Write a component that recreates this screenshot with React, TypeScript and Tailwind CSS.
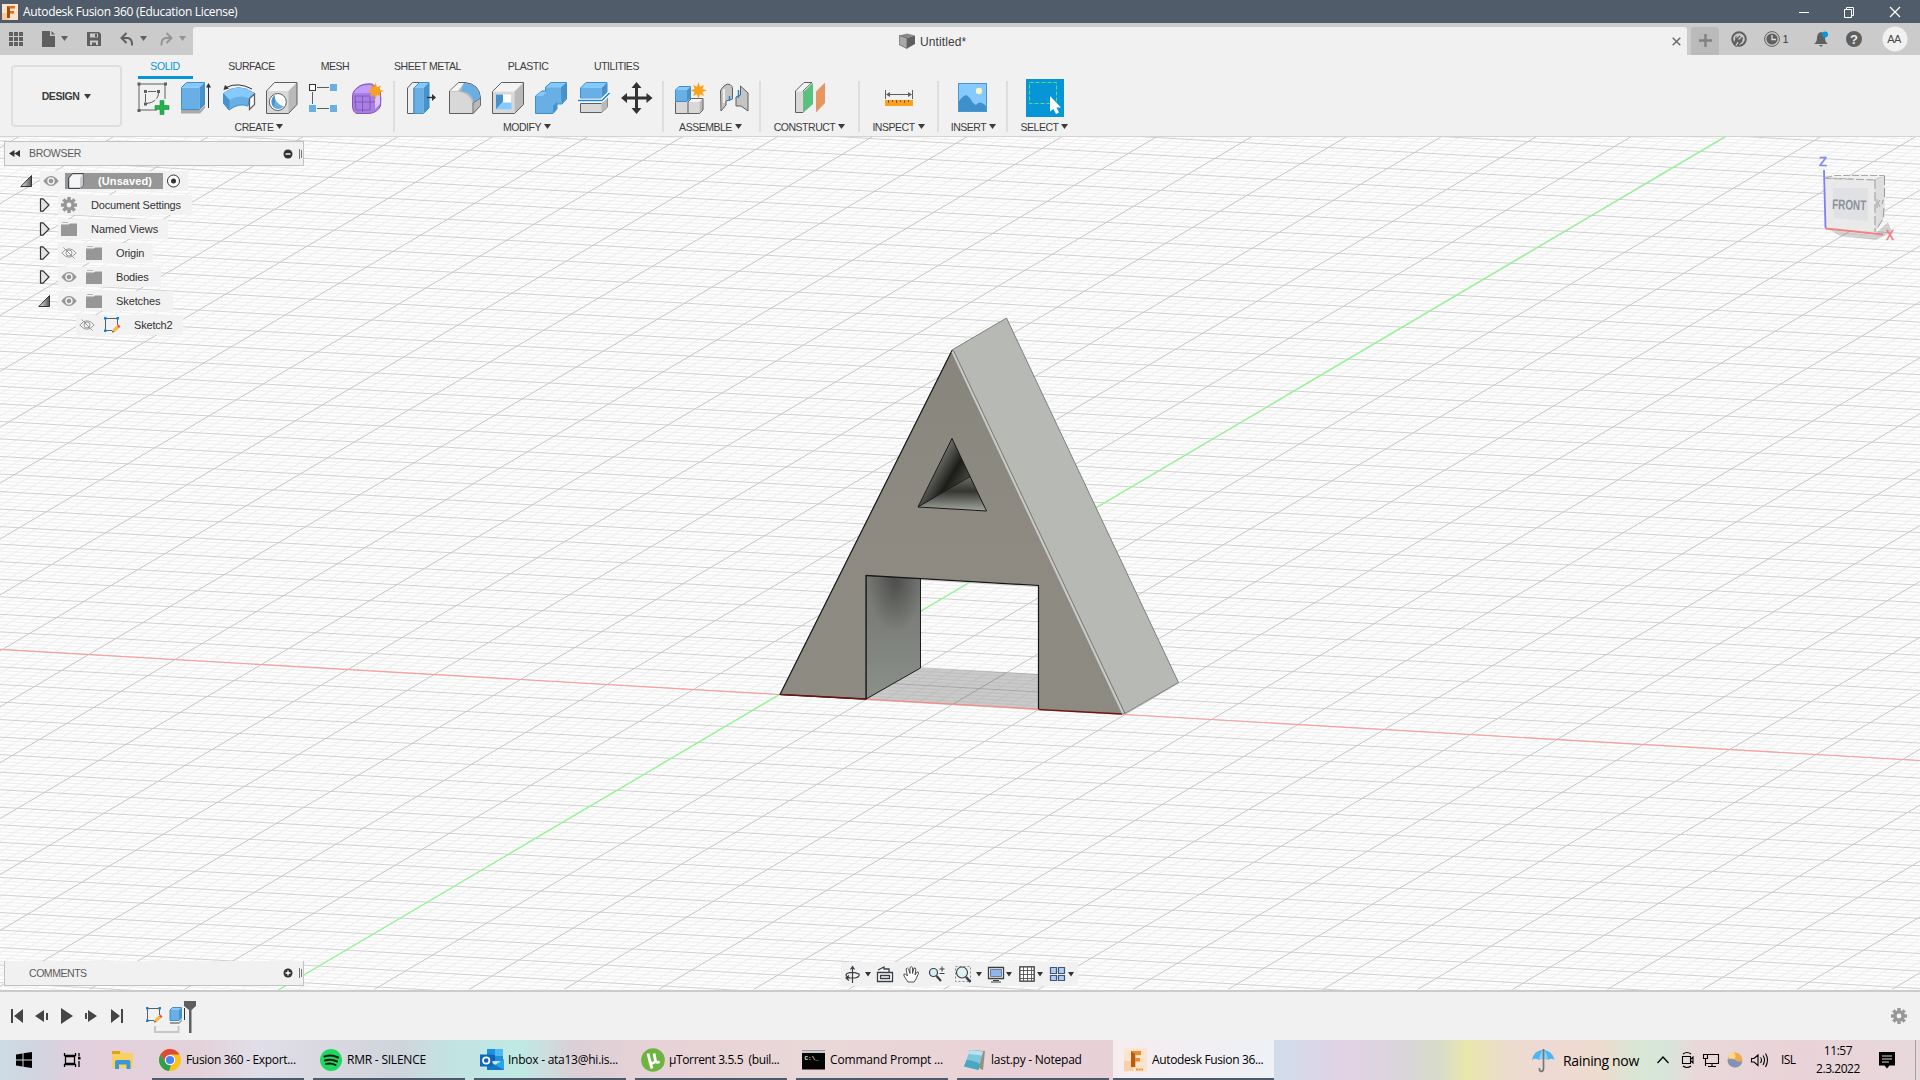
import React from "react";

const APP_FONT = "font-['Liberation_Sans',Arial,sans-serif]";
const SYS_FONT = "font-['Open_Sans','Noto_Sans',sans-serif]";

/* An icon drawn in window coordinates, cropped to the box it occupies. */
function Ico({ x, y, w, h, children }: { x: number; y: number; w: number; h: number; children: React.ReactNode }) {
  return (
    <svg width={w} height={h} viewBox={`${x} ${y} ${w} ${h}`} className="block shrink-0" fill="none">
      {children}
    </svg>
  );
}

function Caret({ className = "text-[#3c3c3c]" }: { className?: string }) {
  return (
    <svg width="7" height="5" viewBox="0 0 7 5" className={`block shrink-0 ${className}`}>
      <path d="M0 0H7L3.5 5Z" fill="currentColor" />
    </svg>
  );
}

function TitleBar() {
  return (
    <header className={`flex h-[23px] items-center bg-[#505c69] text-white ${SYS_FONT}`}>
      <div className="ml-0.5 w-4">
        <Ico x={0} y={0} w={16} h={16}>
          <rect width="16" height="16" fill="#fde3cd" />
          <rect y="9" width="7" height="7" fill="#f6c9a4" />
          <path d="M5 2H13V4.6H8V7H12V9.4H8V14H5Z" fill="#d9701c" />
          <path d="M5 2L8 4.6V14H5Z" fill="#a84c0c" />
        </Ico>
      </div>
      <span className="ml-[5px] whitespace-nowrap pt-px text-[12px] tracking-[-0.32px]">Autodesk Fusion 360 (Education License)</span>
      <div className="ml-auto mr-[19px] flex gap-[34px]">
        <Ico x={0} y={0} w={12} h={12}><path d="M2 6.5H12" stroke="#fff" /></Ico>
        <Ico x={0} y={0} w={12} h={12}>
          <path d="M1.5 3.5H8.5V11.5H1.5ZM3.5 3V1.5H10.500V9.500H9" stroke="#fff" />
        </Ico>
        <Ico x={0} y={0} w={12} h={12}><path d="M1 1L11 11M11 1L1 11" stroke="#fff" strokeWidth="1.2" /></Ico>
      </div>
    </header>
  );
}

function DocBar() {
  return (
    <div className={`flex h-8 bg-[#cbcbcb] ${APP_FONT}`}>
      <div className="w-[193px]">
        <Ico x={0} y={23} w={193} h={32}>
          <g fill="#5f5f5f">
            {[9, 14, 19].map((x) => [32, 37, 42].map((y) => <rect key={`${x}-${y}`} x={x} y={y} width="4" height="4" />))}
            <path d="M42 31H50V36H55V47H42Z" />
            <path d="M51.500 31L55 34.500H51.500Z" />
            <path d="M61 36H68L64.500 41Z" />
            <path fillRule="evenodd" d="M87 32H99L101 34V46H87ZM90 33.500V37.500H98V33.500ZM90 40.500V45H92V42.500H96V45H98V40.500Z" />
            <path d="M95 34H97V37H95Z" />
            <path d="M140 36H147L143.500 41Z" />
          </g>
          <path d="M126.500 33L121.500 38L126.500 43M122 38H128Q132.500 39 132 45.500" stroke="#5f5f5f" strokeWidth="2" />
          <path d="M166.500 33L171.500 38L166.500 43M171 38H165.500Q161 39 161.500 45.500" stroke="#949494" strokeWidth="2" />
          <path d="M179 36H186L182.500 41Z" fill="#949494" />
        </Ico>
      </div>
      <div className="mt-1 flex w-[1494px] items-center rounded-t-[3px] bg-[#f1f1f1]">
        <div className="ml-[706px] flex items-center gap-[5px]">
          <Ico x={0} y={0} w={16} h={16}>
            <path d="M0 2.500L8 0.500L16 2.500L8 5Z" fill="#8a8a8a" />
            <path d="M0 2.500L8 5V15.500L0 11.500Z" fill="#a9a9a9" stroke="#5f5f5f" strokeWidth=".8" />
            <path d="M16 2.500L8 5V15.500L16 11Z" fill="#5f5f5f" />
          </Ico>
          <span className="pt-px text-[12px] tracking-[0.1px] text-[#3c3c3c]">Untitled*</span>
        </div>
        <div className="ml-auto mr-[6px]">
          <Ico x={0} y={0} w={9} h={9}><path d="M.7.7L8.300 8.300M8.300.7L.7 8.300" stroke="#6b6b6b" strokeWidth="1.500" /></Ico>
        </div>
      </div>
      <div className="ml-1 mt-1 flex w-7 items-center justify-center rounded-t-[3px] bg-[#bababa] pb-px">
        <Ico x={0} y={0} w={13} h={13}><path d="M6.500 0V13M0 6.500H13" stroke="#808080" strokeWidth="2.400" /></Ico>
      </div>
      <div className="w-[201px]">
        <Ico x={1719} y={23} w={201} h={32}>
          <circle cx="1739" cy="39" r="6.800" stroke="#5f5f5f" strokeWidth="2" />
          <path d="M1733 44L1736 47L1742 42L1743 37.500L1738.500 35L1735.500 36.500L1735 40Z" fill="#5f5f5f" />
          <path d="M1739 35L1736.500 37.500M1742 36L1738.500 39.500M1736 45.500L1738 42" stroke="#cbcbcb" strokeWidth="1.400" />
          <circle cx="1772" cy="39" r="7.400" stroke="#5f5f5f" />
          <circle cx="1772" cy="39" r="5.600" fill="#5f5f5f" />
          <path d="M1772 35V39.500H1776" stroke="#ddd" strokeWidth="1.300" />
          <path d="M1814 44Q1817 42 1817 38Q1817 33 1821 32Q1825 33 1825 38Q1825 42 1828 44ZM1819 45H1823L1821 47Z" fill="#5f5f5f" />
          <circle cx="1825" cy="34.500" r="3" fill="#0696d7" />
          <circle cx="1854" cy="39" r="8" fill="#5f5f5f" />
          <text x="1854" y="43.800" textAnchor="middle" className="font-['Liberation_Sans'] text-[13px] font-bold" fill="#ececec">?</text>
          <text x="1782.500" y="43" className="font-['Liberation_Sans'] text-[11px]" fill="#3c3c3c">1</text>
          <circle cx="1895" cy="39" r="12.500" fill="#f1f1f1" />
          <text x="1894" y="43" textAnchor="middle" className="font-['Liberation_Sans'] text-[11px] tracking-[-0.5px]" fill="#4b4b4b">AA</text>
        </Ico>
      </div>
    </div>
  );
}

const TABS: [string, string][] = [
  ["SOLID", "w-[55px] pr-px text-[#0696d7] border-[#0696d7]"],
  ["SURFACE", "w-[117px] border-transparent"],
  ["MESH", "w-[50px] border-transparent"],
  ["SHEET METAL", "w-[135px] border-transparent"],
  ["PLASTIC", "w-[66px] border-transparent"],
  ["UTILITIES", "w-[111px] border-transparent"],
];

const G = "#5f5f5f";
const Star = ({ x, y }: { x: number; y: number }) => (
  <g transform={`translate(${x} ${y})`}>
    <path d="M0-8.500L1.500-3.800L5.500-5.500L3.800-1.500L8.500 0L3.800 1.500L5.500 5.500L1.500 3.800L0 8.500L-1.500 3.800L-5.500 5.500L-3.800 1.500L-8.500 0L-3.800-1.500L-5.500-5.500L-1.500-3.800Z" fill="#faa21b" />
  </g>
);

/* Box with a light top and a dark right side. */
const Box = ({ x, y, w, h, d, blue, line = G }: { x: number; y: number; w: number; h: number; d: number; blue?: boolean; line?: string }) => (
  <g stroke={blue ? "#3f8fca" : line} strokeWidth="1" strokeLinejoin="round">
    <path d={`M${x} ${y + d}h${w}v${h}h${-w}Z`} fill={blue ? "#68afe6" : "#d8d8d8"} stroke="none" />
    <path d={`M${x} ${y + d}l${d} ${-d}h${w}l${-d} ${d}Z`} fill={blue ? "#86c9ff" : "#f4f4f4"} stroke="none" />
    <path d={`M${x + w} ${y + d}l${d} ${-d}v${h}l${-d} ${d}Z`} fill={blue ? "#4792cd" : "#b9b9b9"} stroke="none" />
    <path d={`M${x} ${y + d}l${d} ${-d}h${w}v${h}l${-d} ${d}h${-w}Z`} />
  </g>
);

const CREATE_ICONS = [
  <g key="sketch">
    <path d="M139 84H165M139 84V110M165 84V99M139 110H157" stroke={G} />
    <path d="M137.500 82.500h3v3h-3zM164 82.500h3v3h-3zM137.500 109h3v3h-3zM144 90h3v3h-3zM157 90h3v3h-3zM144 102.500h3v3h-3z" fill={G} />
    <path d="M148 91.500H156M145.500 94V102M147 103.500Q158 102 158.500 93" stroke={G} strokeDasharray="9 2" />
    <path d="M160 100.500h4v5h5v4h-5v5h-4v-5h-5v-4h5z" fill="#24b04e" stroke="#1d9340" strokeWidth=".6" />
  </g>,
  <g key="extrude">
    <path d="M181 110H200L205 105V108L200 113.500H181Z" fill="#a9a9a9" />
    <Box x={181.500} y={82.500} w={18} h={22} d={5} blue />
    <path d="M208.500 108V84" stroke="#333" /><path d="M206 87.500L208.500 83L211 87.500Z" fill="#333" />
  </g>,
  <g key="revolve">
    <path d="M223.500 93.500Q238 82 254.500 93.500L249.500 98.500L248 106Q239 102.500 229 110L223.500 103Z" fill="#68afe6" stroke="#3f8fca" />
    <path d="M223.500 93.500Q238 82 254.500 93.500L249 98.500Q240 94 229.500 100Z" fill="#86c9ff" />
    <path d="M223.500 93.500L229.500 100V110.500L223.500 104Z" fill="#4792cd" />
    <path d="M249.500 98.500L254.500 94V104.500L249.500 109.500Z" fill="#fff" stroke={G} strokeWidth="1.300" />
    <path d="M226 87.500Q238 81.500 252 89" stroke="#333" /><path d="M223.500 90L225 85L229 88.500Z" fill="#333" />
  </g>,
  <g key="hole">
    <path d="M266.500 91L274.500 82.500H297V104.500L288.500 113.500H266.500Z" fill="#d8d8d8" />
    <path d="M266.500 91L274.500 82.500H297L288.500 91Z" fill="#f4f4f4" /><path d="M288.500 91L297 82.500V104.500L288.500 113.500Z" fill="#b9b9b9" />
    <path d="M266.500 91L274.500 82.500H297V104.500L288.500 113.500H266.500Z" stroke={G} />
    <circle cx="277.800" cy="102" r="8.500" fill="#fff" stroke={G} />
    <path d="M274.500 95Q275 104 284 106.500Q279 111 273.500 107.500Q269 101 274.500 95Z" fill="#68afe6" />
    <path d="M274.500 95Q269 101 273.500 107.500L275 102Z" fill="#4792cd" />
  </g>,
  <g key="pattern">
    <rect x="309.500" y="84.500" width="6" height="6" fill="#fff" stroke="#333" />
    <path d="M317 87.500H329M312.500 92V104M317 108.500H329" stroke={G} />
    <path d="M330 84h7v7h-7zM330 105h7v7h-7zM309 105h7v7h-7z" fill="#68afe6" />
  </g>,
  <g key="form">
    <path d="M352.500 97Q352.500 91 357 88Q362 83 372 84L380 90Q381.500 99 380.500 106Q377 113 369 113.500H357Q352.500 112 352.500 106Z" fill="#a97ee3" stroke="#8355b5" />
    <path d="M354 93Q358 84.500 371 85L375 89L371 93Z" fill="#c09cff" />
    <path d="M355 96H370V110H356ZM362.500 96V112M354 102H374L381 98M371 92L375 90" stroke="#7b4fb4" strokeWidth=".8" />
    <path d="M375 95L380 93V104L375 109Z" fill="#dac4ff" />
    <Star x={375.500} y={91} />
  </g>,
];

const MODIFY_ICONS = [
  <g key="press">
    <path d="M407.500 88L412.500 82.500H420L414 88V113.500H407.500Z" fill="#eee" stroke={G} />
    <Box x={414} y={82.500} w={9.500} h={25.500} d={5.500} blue />
    <path d="M427 97.500H433" stroke="#333" strokeWidth="1.400" /><path d="M432 94L436 97.500L432 101Z" fill="#333" />
  </g>,
  <g key="fillet">
    <path d="M449.500 91L458.500 82.500H465Q479.500 84 480.500 98V105.500L473 113.500H449.500Z" fill="#b9b9b9" stroke={G} />
    <path d="M450 91.500H457Q472 93 472.500 106V113H450Z" fill="#d8d8d8" />
    <path d="M450 91L458.500 83H464L458 91Z" fill="#f4f4f4" />
    <path d="M464 83Q479 84 480.500 99L474 103Q472 92 461 91Z" fill="#68afe6" />
    <path d="M473 103L480.500 98V105.500L473 113.500Z" fill="#b9b9b9" stroke={G} strokeWidth=".7" />
  </g>,
  <g key="shell">
    <Box x={492.500} y={82.500} w={22} h={22} d={9} />
    <path d="M496 94.500H511V109.500H496Z" fill="#fff" />
    <path d="M496 94.500H503V102L496 109.500Z" fill="#4792cd" /><path d="M496 109.500L503 102.500H511.500V109.500Z" fill="#86c9ff" />
  </g>,
  <g key="combine">
    <path d="M535.500 96L542 91H545.500V87L551 82.500H566.500V99L562 104H557V109L553 113.500H535.500Z" fill="#68afe6" stroke="#3f8fca" />
    <path d="M546 87.500L551 83H566L561 87.500ZM536 96L541 92H546L543 96Z" fill="#86c9ff" />
    <path d="M561 87.500L566 83V99L561.500 103.500ZM553 106L557 102V109L553 113Z" fill="#4792cd" />
  </g>,
  <g key="split">
    <Box x={580.500} y={82.500} w={21} h={10.500} d={5.500} blue />
    <path d="M580.500 103.500H601.500L607.500 97V107L601.500 112.500H580.500Z" fill="#d8d8d8" stroke={G} />
    <path d="M601.500 103.500L607.500 97.500V107L601.500 112.500Z" fill="#b9b9b9" />
    <path d="M578 100.500H602L609.500 93" stroke="#fff" strokeWidth="4" /><path d="M578 100.500H602L609.500 93" stroke="#1787e0" strokeWidth="1.500" />
  </g>,
  <g key="move">
    <path d="M636.500 87V109M626 98H648" stroke="#333" strokeWidth="3" />
    <path d="M636.500 82L641.500 88H631.500ZM636.500 114L641.500 108H631.500ZM621 98L627 93V103ZM652.500 98L646.500 93V103Z" fill="#333" />
  </g>,
];

const ASSEMBLE_ICONS = [
  <g key="comp">
    <Box x={675.500} y={98.500} w={12} h={11.500} d={3.500} />
    <Box x={688} y={98.500} w={11.500} h={11.500} d={3.500} />
    <Box x={675.500} y={86.500} w={11.500} h={11.500} d={3.500} blue />
    <Star x={698.500} y={90.500} />
  </g>,
  <g key="joint" stroke={G}>
    <path d="M720.500 91Q721 89 724 86Q727 83 730 84.500Q732.500 86 732.500 89V99L726 101V105L721 111Z" fill="#c4c4c4" />
    <path d="M740.500 86L748 93V111L741 106H736V97L740.500 95Z" fill="#c4c4c4" />
    <path d="M724 89V103" stroke="#eee" strokeWidth="2" />
    <path d="M738.500 90V98M729.500 96V101" stroke="#1787e0" strokeWidth="1.500" />
  </g>,
];

const CONSTRUCT_ICONS = [
  <g key="plane">
    <path d="M795.500 91L804 82.500H812L803 91V112.500H795.500Z" fill="#f4f4f4" stroke={G} /><path d="M796 91.500H803V112H796Z" fill="#d8d8d8" />
    <path d="M803.500 92L813 83V104L803.500 112.500Z" fill="#56c27b" /><path d="M816 91.500L825 82.500V103L816 112.500Z" fill="#e69660" />
  </g>,
];
const INSPECT_ICONS = [
  <g key="measure">
    <path d="M885.500 90V99M912.500 90V99M887 94.500H911" stroke={G} /><path d="M886 94.500L890 92V97ZM912 94.500L908 92V97Z" fill={G} />
    <rect x="885" y="100" width="28" height="6" fill="#faa21b" />
    <path d="M888.500 100v3M892.500 100v2M896.500 100v3M900.500 100v2M904.500 100v3M908.500 100v2" stroke="#7d5514" />
  </g>,
];
const INSERT_ICONS = [
  <g key="img">
    <rect x="958" y="83" width="29" height="29" fill="#86c9ff" />
    <path d="M958 103Q962 96 966 95Q970 97 973 103L976 105Q980 99 987 107V112H958Z" fill="#3f8fca" />
    <circle cx="979" cy="91" r="3.200" fill="#fdf7c0" /><rect x="958.500" y="83.500" width="28" height="28" stroke="#4a97cf" />
  </g>,
];
const SELECT_ICONS = [
  <g key="sel">
    <rect x="1026" y="79" width="38" height="38" fill="#0696d7" />
    <rect x="1029.500" y="82.500" width="27" height="21" stroke="#63d883" strokeDasharray="4 2" />
    <path d="M1050 96L1061 107.500H1056.500L1059 112.500L1056 114L1053.500 109L1050 111.500Z" fill="#fff" />
  </g>,
];

const SECTIONS: { name: string; cls: string; pad: string; lab: string; x: number; step: number; icons: React.ReactNode[] }[] = [
  { name: "CREATE", cls: "w-[268px]", pad: "pl-[6px]", lab: "", x: 132, step: 43, icons: CREATE_ICONS },
  { name: "MODIFY", cls: "w-[269px]", pad: "pl-[6px]", lab: "pr-px", x: 400, step: 43, icons: MODIFY_ICONS },
  { name: "ASSEMBLE", cls: "w-[97px]", pad: "pl-[6px]", lab: "", x: 669, step: 43, icons: ASSEMBLE_ICONS },
  { name: "CONSTRUCT", cls: "w-[99px]", pad: "pl-[31px]", lab: "pl-[2px]", x: 791, step: 38, icons: CONSTRUCT_ICONS },
  { name: "INSPECT", cls: "w-[79px]", pad: "pl-[21px]", lab: "pl-[2px]", x: 880, step: 38, icons: INSPECT_ICONS },
  { name: "INSERT", cls: "w-[69px]", pad: "pl-[16px]", lab: "pl-[4px]", x: 954, step: 38, icons: INSERT_ICONS },
  { name: "SELECT", cls: "w-[76px]", pad: "pl-[19px]", lab: "pr-px", x: 1026, step: 38, icons: SELECT_ICONS },
];

function Toolbar() {
  return (
    <div className={`flex h-[82px] border-b border-[#d4d4d4] bg-[#f1f1f1] text-[#3c3c3c] ${APP_FONT}`}>
      <button className="ml-[11px] mt-[10px] flex h-[62px] w-[111px] items-center justify-center gap-[5px] rounded border-2 border-[#dedede] pt-px text-[10.5px] font-bold tracking-[-0.45px]">
        DESIGN
        <Caret />
      </button>
      <div className="ml-[4px]">
        <div className="ml-3 flex h-6">
          {TABS.map(([t, c]) => (
            <div key={t} className={`flex h-6 justify-center whitespace-nowrap border-b-[3px] pt-[3px] text-[10.5px] leading-4 tracking-[-0.45px] ${c}`}>{t}</div>
          ))}
        </div>
        <div className="flex">
          {SECTIONS.map((s, i) => (
            <div key={s.name} className={`flex h-[55px] ${s.cls}`}>
              <div className="min-w-0 flex-1">
                <div className={`flex ${s.pad}`}>
                  {s.icons.map((ic, k) => (
                    <Ico key={k} x={s.x + k * s.step} y={79} w={s.step} h={38}>{ic}</Ico>
                  ))}
                </div>
                <div className={`flex items-center justify-center gap-[3px] whitespace-nowrap text-[10.5px] leading-[18px] tracking-[-0.48px] ${s.lab}`}>
                  <span className="mt-px">{s.name}</span>
                  <Caret className="mb-px text-[#3c3c3c]" />
                </div>
              </div>
              {i < SECTIONS.length - 1 && <div className="mt-0.5 h-[51px] w-0.5 translate-x-px bg-[#dedede]" />}
            </div>
          ))}
        </div>
      </div>
    </div>
  );
}

/* ---- canvas ---- */
const SLOPE_X = 0.0579;
const SLOPE_Y = -0.5895;

function gridPath(kind: "x" | "y", step: number, major: boolean) {
  let d = "";
  for (let i = -320; i <= 320; i++) {
    if ((i % 5 === 0) !== major) continue;
    if (kind === "x") {
      const y = 649.4 + i * step;
      d += `M0 ${y.toFixed(2)}L1920 ${(y + SLOPE_X * 1920).toFixed(2)}`;
    } else {
      const x = 279.6 + i * step;
      d += `M${x.toFixed(2)} 989.300L${(x - 860 / SLOPE_Y).toFixed(2)} 129.300`;
    }
  }
  return d;
}

function Scene() {
  return (
    <svg width="1920" height="853" viewBox="0 137 1920 853" fill="none" className="block">
      <defs>
        <linearGradient id="front" x1="0" y1="350" x2="0" y2="714" gradientUnits="userSpaceOnUse">
          <stop offset="0" stopColor="#88867c" /><stop offset=".5" stopColor="#8e8a82" /><stop offset="1" stopColor="#8d8b81" />
        </linearGradient>
        <linearGradient id="leg" x1="0" y1="575" x2="0" y2="699" gradientUnits="userSpaceOnUse">
          <stop offset="0" stopColor="#747672" /><stop offset=".4" stopColor="#7c7f7a" /><stop offset="1" stopColor="#8b908a" />
        </linearGradient>
        <radialGradient id="legdark" cx="0" cy="0" r="1" fx="0" fy="0" gradientUnits="userSpaceOnUse" gradientTransform="translate(895 577) scale(28 56)">
          <stop offset="0" stopColor="#444442" stopOpacity=".85" /><stop offset="1" stopColor="#4c4c4a" stopOpacity="0" />
        </radialGradient>
        <linearGradient id="holeA" x1="925" y1="470" x2="962" y2="492" gradientUnits="userSpaceOnUse">
          <stop offset="0" stopColor="#8a8c86" /><stop offset=".6" stopColor="#1b1b18" /><stop offset="1" stopColor="#4a4b47" />
        </linearGradient>
        <linearGradient id="holeB" x1="0" y1="478" x2="0" y2="511" gradientUnits="userSpaceOnUse">
          <stop offset="0" stopColor="#666862" /><stop offset=".4" stopColor="#34352f" /><stop offset="1" stopColor="#a5a8a2" />
        </linearGradient>
      </defs>
      <rect y="137" width="1920" height="853" fill="#fdfdfd" />
      <path d={gridPath("x", 3.508, false)} stroke="#eeeeee" />
      <path d={gridPath("y", 18.97, false)} stroke="#ededed" />
      <path d={gridPath("x", 3.508, true)} stroke="#d0d0d0" />
      <path d={gridPath("y", 18.97, true)} stroke="#c6c6c6" />
      <path d="M0 649.400L1920 760.500" stroke="#ff9c9c" strokeWidth="1.100" />
      <path d="M278 990.200L1726 136" stroke="#8cfb8c" strokeWidth="1.200" />

      <path d="M920.500 668L1038 674V709L866 699Z" fill="#000" fillOpacity=".2" />
      <path d="M866 699L1038 709" stroke="#ef8b8b" />
      <path d="M866 575.500L920.500 578.500V668L866 699Z" fill="url(#leg)" />
      <path d="M866 575.500L920.500 578.500V668L866 699Z" fill="url(#legdark)" stroke="#1c1c1c" />
      <path d="M952 350L1006.500 318L1178.500 682.500L1124 714Z" fill="#b6b9b4" stroke="#7e807c" />
      <path d="M952 350L780 694.500L866 699V575.500L1038.500 585.500V709L1124 714ZM952 438.500L918 507L986.500 511Z" fillRule="evenodd" fill="url(#front)" />
      <path d="M952 438.500L918 507L970 476.500Z" fill="url(#holeA)" />
      <path d="M918 507L970 476.500L986.500 511Z" fill="url(#holeB)" />
      <path d="M952 438.500L918 507L986.500 511ZM918 507L970 476.500" stroke="#151515" />
      <path d="M952 350.500L780 694.500L866 699V575.500L1038.500 585.500V709" stroke="#151515" strokeWidth="1.200" />
      <path d="M780.500 694.500L866 699M1038.500 709.500L1122 714" stroke="#6d1414" strokeWidth="1.300" />
      <path d="M952.500 351.500L1123 713" stroke="#cbc9c5" strokeWidth="2.400" />
      <path d="M953.500 350.500L1125 713.500" stroke="#6f706c" strokeWidth=".9" />

      <g>
        <path d="M1830 230L1874 235L1888 222L1892 232L1876 240L1840 236Z" fill="#000" fillOpacity=".16" />
        <path d="M1825.500 178L1834 175.500H1884.500L1875 180Z" fill="#f1f1f1" stroke="#a8a8a8" strokeDasharray="7 2" />
        <path d="M1825.500 178.500L1875 180V232L1826 228.500Z" fill="#e8e8e9" fillOpacity=".92" />
        <path d="M1833 188H1868V221L1834 218Z" fill="#dfe1e4" />
        <path d="M1875 180L1884.500 175.500V217L1875 232Z" fill="#dedede" />
        <path d="M1875 180V232M1884.500 176V196L1882 204M1884 208L1883 219L1876 230" stroke="#999" strokeDasharray="9 3" />
        <path d="M1875 180L1825.500 178.500" stroke="#aaa" strokeDasharray="8 3" />
        <path d="M1877 199V208M1880 200L1878 203L1880 207" stroke="#a2a4a8" />
        <path d="M1824 170L1825.500 228" stroke="#7f7ff2" strokeWidth="1.800" />
        <path d="M1825.500 228.500L1883 234.500" stroke="#f18080" strokeWidth="1.800" />
        <text x="1832" y="209" transform="rotate(2 1832 209)" textLength="34" lengthAdjust="spacingAndGlyphs" className="font-['Liberation_Sans'] text-[14px] font-bold" fill="#8d919a">FRONT</text>
        <text x="1819" y="166" className="font-['Liberation_Sans'] text-[13px]" fill="#8585f5" stroke="#8585f5" strokeWidth=".5">Z</text>
        <text x="1886" y="240" textLength="8" lengthAdjust="spacingAndGlyphs" className="font-['Liberation_Sans'] text-[14px]" fill="#f47c7c" stroke="#f47c7c" strokeWidth=".5">X</text>
      </g>
    </svg>
  );
}

/* ---- browser tree ---- */
const Eye = ({ off }: { off?: boolean }) => (
  <Ico x={0} y={0} w={16} h={16}>
    {off ? (
      <g stroke="#9c9c9c">
        <path d="M.8 8Q8-.5 15.200 8Q8 16.500.8 8Z" /><circle cx="8" cy="8" r="3" /><path d="M2.500 2.500L13.500 13.500" />
      </g>
    ) : (
      <g><path d="M.3 8Q8-2 15.700 8Q8 18 .3 8Z" fill="#979797" /><circle cx="8" cy="8" r="3" stroke="#f2f2f2" strokeWidth="1.400" /></g>
    )}
  </Ico>
);
const Folder = () => (
  <Ico x={0} y={0} w={16} h={14}>
    <path d="M0 3H7L9 1.500H16V14H0Z" fill="#979797" /><path d="M1 .5H7M0 2.700H7.500" stroke="#b7b7b7" />
  </Ico>
);
const Gear = ({ s }: { s: number }) => (
  <svg width={s} height={s} viewBox="-8 -8 16 16" className="block shrink-0">
    {[0, 45, 90, 135].map((a) => <rect key={a} x="-1.700" y="-8" width="3.400" height="16" fill="#979797" transform={`rotate(${a})`} />)}
    <circle r="5.700" fill="#979797" /><circle r="2.400" fill="#f2f2f2" />
  </svg>
);
const SketchShape = () => (
  <g>
    <path d="M2 1.500H13.500M1.500 2V13.500M13.500 2V8M2 13.500H8" stroke={G} />
    <path d="M0 0h2.500v2.500h-2.500zM12.500 0h2.500v2.500h-2.500zM0 12.500h2.500v2.500h-2.500z" fill="#0f86e0" />
    <path d="M8 15.500L9 12L13 8.500L15.500 10.500L11.500 14.500Z" fill="#f7b844" /><path d="M13 9L14.500 7.500L16.500 9.500L15 11Z" fill="#ee4d4d" /><path d="M8 15.500L8.600 13.500L10.300 15Z" fill="#555" />
  </g>
);
const SketchIcon = () => (
  <Ico x={0} y={0} w={17} h={16}>
    <SketchShape />
  </Ico>
);
const Toggle = ({ open }: { open?: boolean }) => (
  <Ico x={0} y={0} w={12} h={14}>
    {open ? (
      <g><path d="M.8 12.500H11.500V1.500Z" fill="url(#tog)" stroke="#333" />
        <defs><linearGradient id="tog"><stop offset="0" stopColor="#eee" /><stop offset="1" stopColor="#555" /></linearGradient></defs></g>
    ) : <path d="M2.500.8L5 .8L11 7L5 13.200H2.500Z" fill="#e3e5e7" stroke="#333" strokeWidth="1.200" />}
  </Ico>
);

const TREE: { label: string; pad: string; lead: string; track: string; open?: boolean; toggle?: boolean; icons: React.ReactNode[]; w: string }[] = [
  { label: "Document Settings", pad: "pl-[38px]", lead: "ml-2", track: "tracking-[-0.18px]", toggle: true, icons: [<Gear s={16} key="g" />], w: "w-[134px]" },
  { label: "Named Views", pad: "pl-[38px]", lead: "ml-2", track: "tracking-[-0.05px]", toggle: true, icons: [<Folder key="f" />], w: "w-[110px]" },
  { label: "Origin", pad: "pl-[38px]", lead: "ml-2", track: "tracking-[-0.18px]", toggle: true, icons: [<Eye off key="e" />, <Folder key="f" />], w: "w-[95px]" },
  { label: "Bodies", pad: "pl-[38px]", lead: "ml-2", track: "tracking-[-0.18px]", toggle: true, icons: [<Eye key="e" />, <Folder key="f" />], w: "w-[103px]" },
  { label: "Sketches", pad: "pl-[38px]", lead: "ml-2", track: "tracking-[-0.1px]", toggle: true, open: true, icons: [<Eye key="e" />, <Folder key="f" />], w: "w-[115px]" },
  { label: "Sketch2", pad: "pl-[76px]", lead: "", track: "-ml-px tracking-[-0.18px]", icons: [<Eye off key="e" />, <SketchIcon key="s" />], w: "w-[107px]" },
];

function Browser() {
  return (
    <div className={`absolute left-0 top-[4px] w-[304px] text-[#333] ${APP_FONT}`}>
      <div className="ml-1 flex h-[25px] items-center border border-[#c2c2c2] bg-[#f1f1f1]">
        <div className="ml-1"><Ico x={0} y={0} w={11} h={7}><path d="M5.500 0V7L0 3.500ZM11 0V7L5.500 3.500Z" fill="#333" /></Ico></div>
        <span className="ml-[9px] text-[10.500px] tracking-[-0.3px] text-[#5c5c5c]">BROWSER</span>
        <div className="ml-auto"><Ico x={0} y={0} w={20} h={12}>
          <circle cx="5" cy="6" r="4.500" fill="#333" /><path d="M2.500 6H7.500" stroke="#fff" strokeWidth="1.400" />
          <path d="M16.500 1V11M18.500 2V10" stroke="#777" />
        </Ico></div>
      </div>
      <div className="mt-[5px] flex h-5 items-center pl-5">
        <Toggle open />
        <div className="ml-2 flex h-5 w-[148px] items-center bg-[#f2f2f2] pl-[3px]">
          <Eye />
          <div className="ml-1.5 flex h-4 w-[98px] items-center bg-[#979797] pl-[3px]">
            <Ico x={0} y={0} w={16} h={16}><path d="M.7 5L4.500.7H15.300V12L12 15.300H.7Z" fill="#f4f5f7" stroke="#333" /><path d="M12 5L15.300 1V12L12 15.300Z" fill="#c9cdd3" /></Ico>
            <span className="ml-3.5 text-[11px] font-bold tracking-[0.1px] text-white">(Unsaved)</span>
          </div>
          <div className="ml-[3px]"><Ico x={0} y={0} w={14} h={14}><circle cx="7.500" cy="7" r="6" fill="#fff" stroke="#333" /><circle cx="7.500" cy="7" r="2.500" fill="#333" /></Ico></div>
        </div>
      </div>
      {TREE.map((r) => (
        <div key={r.label} className={`mt-1 flex h-5 items-center ${r.pad}`}>
          {r.toggle && <Toggle open={r.open} />}
          <div className={`flex h-5 items-center gap-[9px] bg-[#f2f2f2] pl-[3px] ${r.lead} ${r.w}`}>
            {r.icons}
            <div className="ml-[5px] flex text-[11px] leading-4"><span className={`whitespace-nowrap ${r.track}`}>{r.label}</span></div>
          </div>
        </div>
      ))}
    </div>
  );
}

function Comments() {
  return (
    <div className={`absolute left-1 top-[824px] flex h-[25px] w-[300px] items-center border border-t-0 border-[#c2c2c2] bg-[#f1f1f1] ${APP_FONT}`}>
      <span className="ml-6 pt-0.5 text-[10.500px] tracking-[-0.45px] text-[#5c5c5c]">COMMENTS</span>
      <div className="ml-auto"><Ico x={0} y={0} w={20} h={12}>
        <circle cx="5" cy="6" r="4.500" fill="#333" /><path d="M2.500 6H7.500M5 3.500V8.500" stroke="#fff" strokeWidth="1.300" />
        <path d="M16.500 1V11M18.500 2V10" stroke="#777" />
      </Ico></div>
    </div>
  );
}

function NavBar() {
  const dk = "#3a3f45";
  return (
    <div className="absolute left-[841px] top-[825px] h-6 w-[237px] bg-[#f1f1f1]">
      <Ico x={841} y={962} w={237} h={24}>
        <g stroke={dk}>
          <path d="M852.500 967V983M850.500 969.500L852.500 966.500L854.500 969.500M850 978Q844 976 847 973.500Q853 971 859 974Q860 977 855 978H846M849 975.500L846 978L849 980.500" strokeWidth="1.200" />
          <path d="M877.500 972.500H892.500V981.500H877.500ZM878 970L884 967V969H889V972M880.500 975.500H889.500V978.500H880.500Z" fill="#fff" strokeWidth="1.300" />
          <path d="M908 982L904 976Q903 973.500 905.500 974L907.500 976L906 969Q907.500 967 908.500 969L910 973.500L910 967.500Q911.500 966 912.500 967.500V973.500L914 968Q916 967.500 915.800 969.500L915 975L917 972Q919 971.500 918.500 973.500L916 979L914 982Z" fill="#fff" strokeWidth=".9" />
          <circle cx="933.500" cy="972.500" r="4" fill="#d7eef5" strokeWidth="1.200" /><path d="M936.500 976L941 981" strokeWidth="2.200" />
          <path d="M942 966.500V971.500M939.500 969H944.500M939.500 973.500H944.500" />
          <rect x="955.500" y="966.500" width="15" height="15" strokeDasharray="2 2" stroke="#888" />
          <circle cx="962" cy="972.500" r="5.500" fill="#dff1f3" strokeWidth="1.100" /><path d="M966 977L970.500 982" strokeWidth="2.600" />
          <path d="M988.500 967.500H1003.500V978.500H988.500Z" fill="#fff" strokeWidth="1.300" /><path d="M990.500 969.500H1001.500V976.500H990.500Z" fill="#8db7ee" strokeWidth=".6" /><path d="M993 980.500H999M991 982H1001" />
          <rect x="1020" y="967" width="14" height="14" fill="#fff" /><path d="M1019.500 966.500H1034.500V981.500H1019.500ZM1023.500 967V981M1027.500 967V981M1031.500 967V981M1020 970.500H1034M1020 974.500H1034M1020 978.500H1034" stroke="#555" strokeWidth=".9" />
          <path d="M1050.500 967.500H1056.500V973.500H1050.500ZM1058.500 967.500H1064.500V973.500H1058.500ZM1050.500 975.500H1056.500V980.500H1050.500ZM1058.500 975.500H1064.500V980.500H1058.500Z" fill="#b7cdec" stroke="#3d5580" strokeWidth="1.200" />
        </g>
        <path d="M865 972h6l-3 4.500zM976 972h6l-3 4.500zM1006 972h6l-3 4.500zM1037 972h6l-3 4.500zM1068 972h6l-3 4.500z" fill="#333" />
      </Ico>
    </div>
  );
}

function Timeline() {
  return (
    <div className="flex h-[50px] items-center justify-between border-t-2 border-[#cbcbcb] bg-[#f1f1f1]">
      <Ico x={0} y={992} w={210} h={48}>
        <path d="M11 1009h2v14h-2zM23 1009v14l-9-7zM44 1010v12l-9-6zM46 1013h2v7h-2zM61 1008v16l12-8zM85 1013h2v6h-2zM88 1010v12l9-6zM111 1009v14l9-7zM121 1009h2v14h-2z" fill="#454545" />
        <g transform="translate(146 1007)">
          <SketchShape />
        </g>
        <path d="M170 1022H179L182 1019V1021L179 1024H170Z" fill="#999" />
        <Box x={170} y={1007.500} w={9} h={10.500} d={2.500} blue />
        <path d="M184.500 1008V1020" stroke="#333" />
        <path d="M184 1001H196V1006L191.500 1010V1033H189V1010L184 1006Z" fill="#5f5f5f" />
        <path d="M155 1026V1032H178.500V1026" stroke="#c6c6c6" strokeWidth="2" />
      </Ico>
      <div className="mr-[13px]"><Gear s={16} /></div>
    </div>
  );
}

/* ---- taskbar ---- */
const TASKS: { label: string; track: string; active?: boolean; icon: React.ReactNode }[] = [
  {
    label: "Fusion 360 - Export...", track: "tracking-[-0.32px]",
    icon: <><circle cx="12" cy="12" r="11" fill="#fbc318" /><path d="M2.500 6.500A11 11 0 0 1 21.500 6.500H12L8 14.500Z" fill="#dd4a3c" /><path d="M2.500 6.500L8 15L13 17L11 23A11 11 0 0 1 2.500 6.500Z" fill="#2f9e4e" /><circle cx="12" cy="12" r="5.200" fill="#fff" /><circle cx="12" cy="12" r="4.100" fill="#4a86f0" /></>,
  },
  {
    label: "RMR - SILENCE", track: "tracking-[-0.22px]",
    icon: <><circle cx="12" cy="12" r="11" fill="#1ed760" /><path d="M5.500 8.500Q12.500 6 19 9.500M6 12.500Q12.500 10.500 18 13.500M6.800 16Q12 14.500 16.500 17" stroke="#0c1a10" strokeWidth="2" strokeLinecap="round" /></>,
  },
  {
    label: "Inbox - ata13@hi.is...", track: "tracking-[-0.25px]",
    icon: <><path d="M7 1H23V13H7Z" fill="#1f8fe0" /><path d="M15 1H23V8H15Z" fill="#4bb8f2" /><path d="M7 7H15V13H7Z" fill="#0f5fae" /><path d="M7 12L15 17L24 11V22H7Z" fill="#2aa4ea" /><path d="M7 12L24 22H7Z" fill="#1477c8" /><rect x="0" y="6.500" width="12.500" height="12" fill="#0f66bd" /><circle cx="6.200" cy="12.500" r="3.200" stroke="#fff" strokeWidth="1.700" /></>,
  },
  {
    label: "µTorrent 3.5.5  (buil...", track: "tracking-[-0.38px]",
    icon: <><circle cx="12" cy="12" r="11.800" fill="#6cb33f" /><path d="M7 5.500L9 13.500Q11.500 17 14.500 13L13 5.500M14.500 13Q16 15.500 18.500 13.500M8.500 12L11 20.500" stroke="#fff" strokeWidth="2.800" /></>,
  },
  {
    label: "Command Prompt ...", track: "tracking-[-0.17px]",
    icon: <><rect x="0" y="2.500" width="23" height="19" fill="#050505" /><rect x="0" y="2.500" width="23" height="2.500" fill="#c9ccd2" /><text x="2.500" y="12" className="font-['Liberation_Mono'] text-[6px] font-bold" fill="#e6e6e6">C:\_</text></>,
  },
  {
    label: "last.py - Notepad", track: "tracking-[-0.25px]",
    icon: <><path d="M6 2L22 3L20 22L16 20Z" fill="#9a8f7a" /><path d="M7 2L20 3.500L15.500 22L1 18.500Z" fill="#7ec6dc" /><path d="M7 2L20 3.500L19 7.500L5.500 6Z" fill="#b8e2ee" /><path d="M1 18.500L15.500 22L17 16Q10 12 3.500 12Z" fill="#4ba6c4" /></>,
  },
  {
    label: "Autodesk Fusion 36...", track: "tracking-[-0.36px]", active: true,
    icon: <><rect x="0" y=".5" width="23" height="23" fill="#fde3cb" /><rect y="13" width="9" height="10" fill="#f8cfa8" /><path d="M7 3H17V7H11.500V10H16V13.500H11.500V19H7Z" fill="#ec8a2d" /><path d="M7 3L11 6V19H7Z" fill="#b85c12" /><path d="M12 21.500H19" stroke="#ec9347" strokeWidth="2" strokeDasharray="2 .6" /></>,
  },
];

function Taskbar() {
  return (
    <div className={`flex h-10 text-black ${SYS_FONT} bg-[linear-gradient(90deg,#cbdbe4_0px,#d3d3de_45px,#e2cfdd_75px,#e4d2d9_200px,#e0dfe9_260px,#d9d8e0_330px,#cfd5dc_400px,#c3e3e2_450px,#bfeae4_520px,#dccfd6_575px,#e7d3d7_660px,#ead7d8_820px,#e8d0d7_1110px,#d2dcea_1285px,#e3d2e6_1347px,#d8d5da_1405px,#d8dcc8_1440px,#e9e7ac_1467px,#ecdccf_1510px,#efd9d3_1550px,#eddccf_1600px,#d8e7d6_1640px,#d7e6d9_1665px,#e9d8da_1695px,#e9d3d8_1800px,#e7d8dc_1920px)]`}>
      <div className="w-[152px]">
        <Ico x={0} y={1040} w={152} h={40}>
          <path d="M16 1054.500L22.500 1053.500V1059.500H16ZM23.500 1053.300L32 1052V1059.500H23.500ZM16 1060.500H22.500V1066.500L16 1065.500ZM23.500 1060.500H32V1068L23.500 1066.700Z" fill="#000" />
          <path d="M64.500 1053V1055.500H75.500V1053M64.500 1067V1064.500H75.500V1067M65.500 1056.500H74.500V1063.500H65.500ZM79 1053V1056.500M79 1061V1067" stroke="#000" strokeWidth="1.300" />
          <rect x="78" y="1057" width="2.500" height="2.500" fill="#000" />
          <path d="M112 1051H121L123 1053H133V1068H112Z" fill="#f9d162" /><path d="M112 1051H120V1054H112Z" fill="#e0a20e" />
          <path d="M115 1069V1062Q115 1060 117 1060H128.500Q130.500 1060 130.500 1062V1069H126.500V1064.500H119V1069Z" fill="#3b97d8" />
        </Ico>
      </div>
      {TASKS.map((t) => (
        <div key={t.label} className={t.active ? "-ml-[5px] flex w-[161px] flex-col bg-white/60" : "mr-[9px] flex w-[152px] flex-col"}>
          <div className={`flex h-[38px] items-center pt-px ${t.active ? "pl-[11px]" : "pl-1.5"}`}>
            <svg width="24" height="24" viewBox="0 0 24 24" fill="none" className="shrink-0">{t.icon}</svg>
            <span className={`ml-1 whitespace-pre pt-px text-[12px] ${t.track}`}>{t.label}</span>
          </div>
          <div className="h-0.5 bg-[#4d5a69]" />
        </div>
      ))}
      <div className="ml-auto flex items-center">
        <Ico x={1530} y={1040} w={28} h={40}>
          <path d="M1532 1060Q1534 1050 1543 1050Q1552 1050 1554.500 1060Q1551 1057.500 1548 1060Q1543 1057 1539 1060Q1535 1057.500 1532 1060Z" fill="#4fb4f2" />
          <path d="M1539 1060Q1540 1052 1543 1050Q1547 1052 1548 1060Q1543 1057 1539 1060Z" fill="#8bd0fb" />
          <path d="M1543.500 1049V1069Q1543 1071.500 1541 1071.500Q1539 1071 1539.500 1068" stroke="#777" strokeWidth="1.700" />
        </Ico>
        <span className="ml-[5px] w-[89px] whitespace-nowrap pt-px text-[14px] tracking-[-0.35px]">Raining now</span>
        <Ico x={1652} y={1040} w={120} h={40}>
          <g stroke="#000" strokeWidth="1.300">
            <path d="M1657.500 1063L1663 1057L1668.500 1063" />
            <path d="M1682.500 1056.500H1690.500V1063.500H1682.500ZM1691 1059L1693 1057V1063L1691 1061M1683 1054Q1687 1051 1691 1054M1683 1066Q1687 1069 1691 1066" strokeWidth="1.100" />
            <path d="M1708 1054.500H1718.500V1063.500H1706M1703.500 1054.500H1707.500V1058.500H1703.500ZM1705.500 1059V1066M1712 1064V1066.500M1708 1066.500H1716" strokeWidth="1.100" />
            <path d="M1751.500 1058.500H1754L1758 1055V1065.500L1754 1062H1751.500ZM1760.500 1057.500Q1762.500 1060 1760.500 1063M1763 1055.500Q1766 1060 1763 1065M1765.500 1053.500Q1769.500 1060 1765.500 1067" strokeWidth="1.100" />
          </g>
          <circle cx="1735" cy="1060" r="7.500" fill="#f2a94f" /><circle cx="1732" cy="1056" r="3.500" fill="#ffd98a" />
          <path d="M1727.500 1060Q1731 1057 1735 1060Q1739 1063 1742.300 1061Q1741 1067.500 1735 1067.500Q1728 1067 1727.500 1060Z" fill="#7f93bd" />
        </Ico>
        <span className="ml-[9px] w-[29px] text-[12px] tracking-[-0.6px]">ISL</span>
        <div className="w-14 text-center text-[12px] leading-[18px] tracking-[-0.45px]">
          <div>11:57</div>
          <div>2.3.2022</div>
        </div>
        <Ico x={1866} y={1040} w={54} h={40}>
          <path d="M1879 1052H1895V1065.500H1889.500L1887 1068.500L1884.500 1065.500H1879Z" fill="#000" />
          <path d="M1882 1056H1892M1882 1059H1892M1882 1062H1889" stroke="#e9d8dc" />
          <path d="M1915.500 1040V1080" stroke="#a89fa4" />
        </Ico>
      </div>
    </div>
  );
}

export default function App() {
  return (
    <div className="flex h-[1080px] w-[1920px] flex-col overflow-hidden bg-[#f1f1f1]">
      <TitleBar />
      <DocBar />
      <Toolbar />
      <main className="relative h-[853px] overflow-hidden">
        <Scene />
        <Browser />
        <Comments />
        <NavBar />
      </main>
      <Timeline />
      <Taskbar />
    </div>
  );
}
